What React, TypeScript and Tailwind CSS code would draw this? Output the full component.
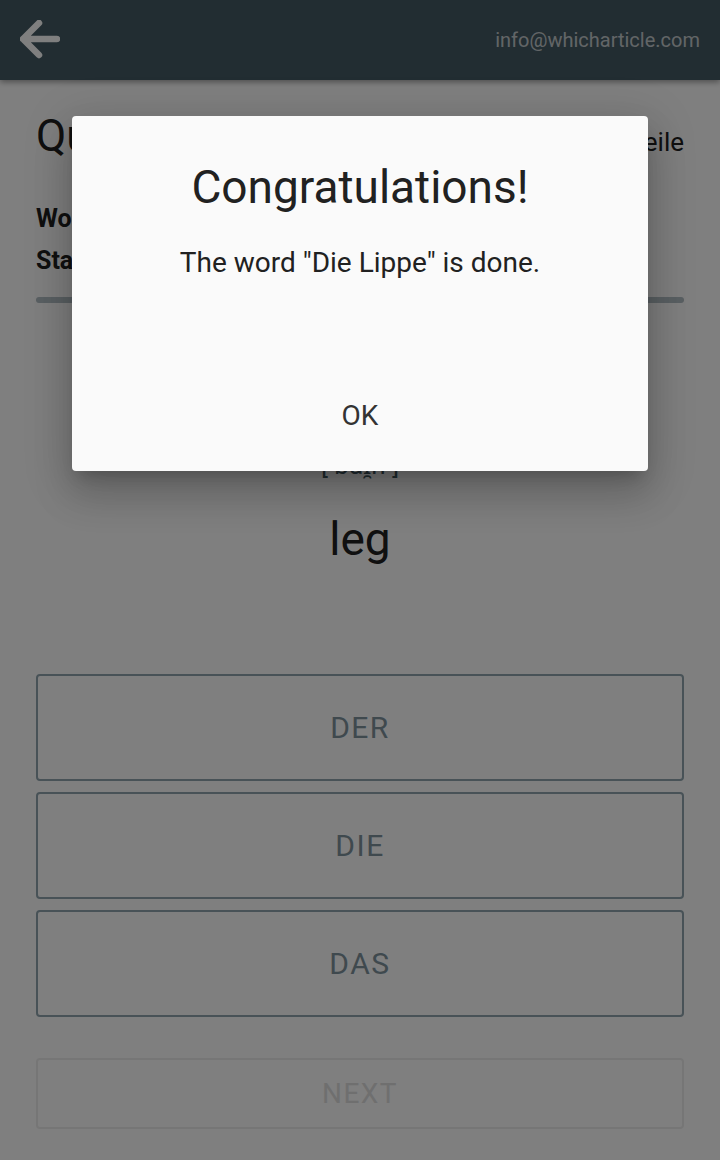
import React from "react";

export default function App() {
  const font = { fontFamily: "Roboto, 'Noto Sans', sans-serif" };
  return (
    <div className="relative w-[720px] h-[1160px] overflow-hidden bg-white" style={font}>
      {/* Header */}
      <header className="relative z-10 h-[80px] bg-[#455a64] flex items-center justify-between pl-[20px] pr-[20px] shadow-[0_2px_6px_rgba(0,0,0,0.4)]">
        <svg width="40" height="40" viewBox="0 0 40 40">
          <path d="M3 19 H37 M19 3 L3 19 L19 35" fill="none" stroke="#ffffff" strokeWidth="6.5" strokeLinecap="round" strokeLinejoin="round" />
        </svg>
        <span className="text-[20px] text-white/70 leading-none">info@whicharticle.com</span>
      </header>

      {/* Content */}
      <main className="px-[36px]">
        <div className="flex items-baseline justify-between mt-[30px] h-[52px]">
          <span className="text-[44px] leading-[52px] text-[#212121]">Quiz</span>
          <span className="text-[26px] text-[#212121]">Körperteile</span>
        </div>
        <div className="mt-[36px] text-[25px] font-bold text-[#212121] leading-[42px]">
          <div>Words: 12 / 20</div>
          <div>Status: 3 correct, 1 wrong</div>
        </div>
        <div className="mt-[15px] h-[6px] rounded-full bg-[#b4c0c6]" />
        <div className="mt-[146px] text-center text-[26px] leading-[32px] text-[#455a64]">[ baɪ̯n ]</div>
        <div className="mt-[30px] text-center text-[46px] leading-[56px] text-[#212121]">leg</div>
        <div className="mt-[107px] flex flex-col gap-[11px]">
          {["DER", "DIE", "DAS"].map((a) => (
            <div key={a} className="h-[107px] border-2 border-[#90a4ae] rounded-[4px] flex items-center justify-center text-[30px] tracking-[1.5px] text-[#7f939d]">
              {a}
            </div>
          ))}
        </div>
        <div className="mt-[41px] h-[71px] border-2 border-[#ececec] rounded-[4px] flex items-center justify-center text-[28px] tracking-[1.5px] text-[#dedede]">
          NEXT
        </div>
      </main>

      {/* Overlay */}
      <div className="absolute inset-0 z-20 bg-black/50" />

      {/* Dialog */}
      <div className="absolute z-30 left-[72px] top-[116px] w-[576px] h-[355px] bg-[#fafafa] rounded-[4px] shadow-[0_11px_15px_-7px_rgba(0,0,0,0.2),0_24px_38px_3px_rgba(0,0,0,0.14),0_9px_46px_8px_rgba(0,0,0,0.12)] flex flex-col items-center">
        <div className="mt-[44px] text-[46px] leading-[54px] text-[#212121]">Congratulations!</div>
        <div className="mt-[32px] text-[28px] leading-[34px] text-[#212121]">The word "Die Lippe" is done.</div>
        <div className="mt-[119px] text-[28px] leading-[34px] text-[#333333]">OK</div>
      </div>
    </div>
  );
}
